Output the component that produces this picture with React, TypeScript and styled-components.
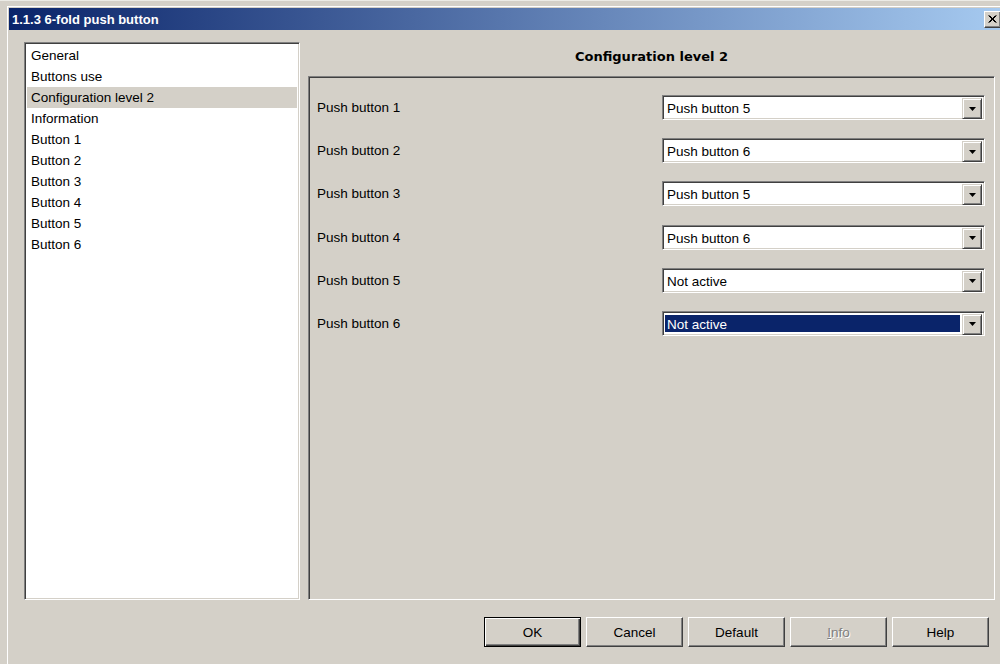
import React from "react";
import styled, { createGlobalStyle } from "styled-components";

const FACE = "#d4d0c8";
const SHADOW = "#808080";
const DARK = "#404040";
const HILITE = "#ffffff";

const GlobalStyle = createGlobalStyle`
  html, body {
    margin: 0;
    padding: 0;
    background: ${FACE};
    overflow: hidden;
  }
  body {
    font-family: "Liberation Sans", Arial, sans-serif;
    font-size: 13.5px;
    color: #000;
  }
  * { box-sizing: border-box; }
`;

const Screen = styled.div`
  width: 1000px;
  height: 664px;
  overflow: hidden;
  padding: 4px 0 0 6px;
  background: ${FACE};
  border-top: 1px solid #ecebe6;
`;

const Window = styled.div`
  width: 1000px;
  height: 662px;
  display: flex;
  flex-direction: column;
  background: ${FACE};
  border: 1px solid;
  border-color: ${FACE} ${DARK} ${DARK} ${FACE};
  box-shadow: inset 1px 1px ${HILITE}, inset -1px -1px ${SHADOW};
  padding: 2px;
`;

const TitleBar = styled.div`
  height: 22px;
  flex: none;
  display: flex;
  align-items: center;
  justify-content: space-between;
  padding: 0 2px 0 3px;
  background: linear-gradient(to right, #0a246a, #a6caf0);
`;

const TitleText = styled.span`
  color: #fff;
  font-family: "Liberation Sans", Arial, sans-serif;
  font-weight: bold;
  font-size: 13px;
`;

const CloseButton = styled.div`
  width: 17px;
  height: 17px;
  display: flex;
  align-items: center;
  justify-content: center;
  background: ${FACE};
  border: 1px solid;
  border-color: ${HILITE} ${DARK} ${DARK} ${HILITE};
  box-shadow: inset -1px -1px ${SHADOW};
`;

const Body = styled.div`
  display: flex;
  gap: 8px;
  padding: 12px 0 0 15px;
  height: 570px;
  flex: none;
`;

const Sunken = styled.div`
  border: 1px solid;
  border-color: ${SHADOW} ${HILITE} ${HILITE} ${SHADOW};
  box-shadow: inset 1px 1px ${DARK}, inset -1px -1px ${FACE};
`;

const PageList = styled(Sunken)`
  width: 276px;
  height: 558px;
  background: #fff;
  padding: 2px;
  display: flex;
  flex-direction: column;
`;

const PageItem = styled.div<{ $selected?: boolean }>`
  height: 21px;
  line-height: 21px;
  padding-left: 4px;
  white-space: nowrap;
  background: ${(p) => (p.$selected ? FACE : "transparent")};
`;

const RightColumn = styled.div`
  width: 687px;
  height: 558px;
  display: flex;
  flex-direction: column;
`;

const Heading = styled.div`
  height: 34px;
  flex: none;
  padding-top: 7px;
  line-height: 16px;
  text-align: center;
  font-family: "DejaVu Sans", Verdana, sans-serif;
  font-weight: bold;
  font-size: 13px;
`;

const GroupBox = styled(Sunken)`
  flex: 1;
  padding: 18px 9px 0 8px;
  display: flex;
  flex-direction: column;
  gap: 18.2px;
`;

const ParamRow = styled.div`
  height: 25px;
  display: flex;
  align-items: center;
  justify-content: space-between;
`;

const ParamLabel = styled.span`
  white-space: nowrap;
`;

const Combo = styled(Sunken)`
  width: 323px;
  height: 25px;
  display: flex;
  background: #fff;
  padding: 2px;
`;

const ComboField = styled.div<{ $focused?: boolean }>`
  flex: 1;
  margin: 1px 2px 1px 0;
  padding-left: 2px;
  line-height: 19px;
  white-space: nowrap;
  background: ${(p) => (p.$focused ? "#0a246a" : "transparent")};
  color: ${(p) => (p.$focused ? "#fff" : "#000")};
`;

const DropButton = styled.div`
  width: 20px;
  height: 21px;
  flex: none;
  display: flex;
  align-items: center;
  justify-content: center;
  background: ${FACE};
  border: 1px solid;
  border-color: ${FACE} ${DARK} ${DARK} ${FACE};
  box-shadow: inset 1px 1px ${HILITE}, inset -1px -1px ${SHADOW};
`;

const Footer = styled.div`
  flex: 1;
  display: flex;
  justify-content: flex-end;
  align-items: flex-start;
  gap: 5px;
  padding: 17px 14px 0 0;
`;

const PushButton = styled.button<{ $default?: boolean }>`
  width: 97px;
  height: 30px;
  font-family: "Liberation Sans", Arial, sans-serif;
  font-size: 13.5px;
  color: ${(p) => (p.disabled ? SHADOW : "#000")};
  text-shadow: ${(p) => (p.disabled ? `1px 1px ${HILITE}` : "none")};
  background: ${FACE};
  padding: 0;
  border: 1px solid;
  border-color: ${(p) =>
    p.$default ? "#000" : `${HILITE} ${DARK} ${DARK} ${HILITE}`};
  box-shadow: ${(p) =>
    p.$default
      ? `inset 1px 1px ${HILITE}, inset -1px -1px ${DARK}, inset -2px -2px ${SHADOW}`
      : `inset -1px -1px ${SHADOW}`};
`;

const Mnemonic = styled.span`
  text-decoration: underline;
`;

const pages = [
  "General",
  "Buttons use",
  "Configuration level 2",
  "Information",
  "Button 1",
  "Button 2",
  "Button 3",
  "Button 4",
  "Button 5",
  "Button 6",
];

const params = [
  { label: "Push button 1", value: "Push button 5" },
  { label: "Push button 2", value: "Push button 6" },
  { label: "Push button 3", value: "Push button 5" },
  { label: "Push button 4", value: "Push button 6" },
  { label: "Push button 5", value: "Not active" },
  { label: "Push button 6", value: "Not active", focused: true },
];

const DownArrow = () => (
  <svg width="7" height="4" viewBox="0 0 7 4">
    <polygon points="0,0 7,0 3.5,4" fill="#000" />
  </svg>
);

const CloseGlyph = () => (
  <svg width="9" height="8" viewBox="0 0 9 8">
    <path
      d="M0.5 0.5 L7.5 7.5 M1.5 0.5 L8.5 7.5 M7.5 0.5 L0.5 7.5 M8.5 0.5 L1.5 7.5"
      stroke="#000"
      strokeWidth="1"
    />
  </svg>
);

export default function App() {
  return (
    <>
      <GlobalStyle />
      <Screen>
        <Window>
          <TitleBar>
            <TitleText>1.1.3 6-fold push button</TitleText>
            <CloseButton>
              <CloseGlyph />
            </CloseButton>
          </TitleBar>
          <Body>
            <PageList>
              {pages.map((p) => (
                <PageItem key={p} $selected={p === "Configuration level 2"}>
                  {p}
                </PageItem>
              ))}
            </PageList>
            <RightColumn>
              <Heading>Configuration level 2</Heading>
              <GroupBox>
                {params.map((r) => (
                  <ParamRow key={r.label}>
                    <ParamLabel>{r.label}</ParamLabel>
                    <Combo>
                      <ComboField $focused={r.focused}>{r.value}</ComboField>
                      <DropButton>
                        <DownArrow />
                      </DropButton>
                    </Combo>
                  </ParamRow>
                ))}
              </GroupBox>
            </RightColumn>
          </Body>
          <Footer>
            <PushButton $default>OK</PushButton>
            <PushButton>Cancel</PushButton>
            <PushButton>Default</PushButton>
            <PushButton disabled>
              <Mnemonic>I</Mnemonic>nfo
            </PushButton>
            <PushButton>Help</PushButton>
          </Footer>
        </Window>
      </Screen>
    </>
  );
}
